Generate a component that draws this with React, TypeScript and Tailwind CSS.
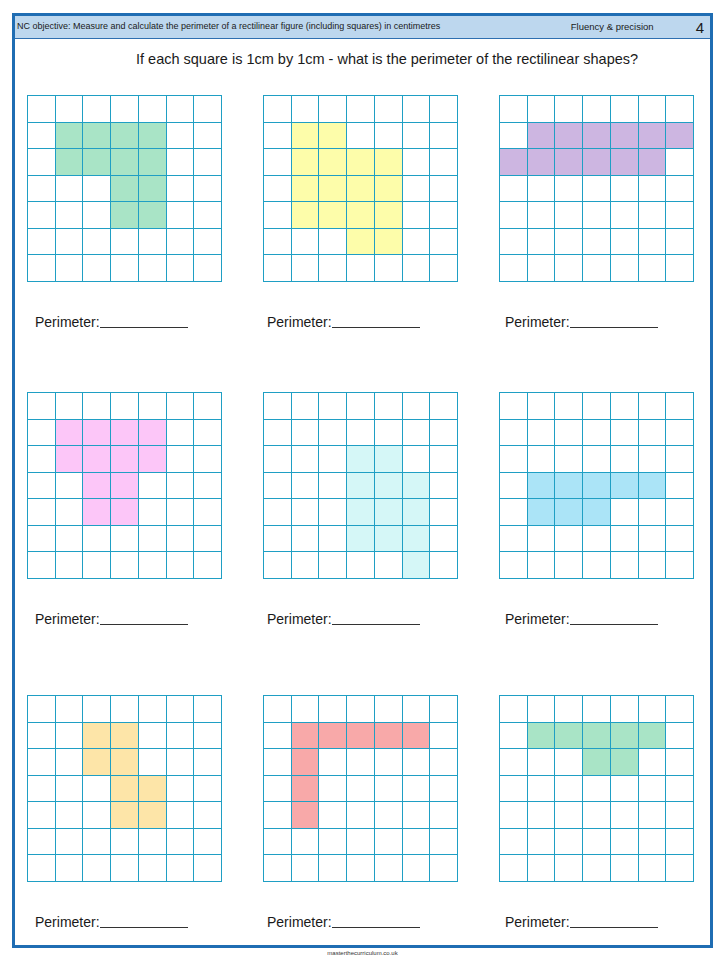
import React from "react";

type Shape = {
  color: string;
  cells: string[];
};

// each cell written as "row,col" on a 7x7 board
function span(rows: number[], cols: number[]): string[] {
  const out: string[] = [];
  rows.forEach((r) => cols.forEach((c) => out.push(`${r},${c}`)));
  return out;
}

const shapes: Shape[] = [
  { color: "bg-[#a9e4c6]", cells: [...span([1, 2], [1, 2, 3, 4]), ...span([3, 4], [3, 4])] },
  {
    color: "bg-[#fdfdaa]",
    cells: [...span([1], [1, 2]), ...span([2, 3, 4], [1, 2, 3, 4]), ...span([5], [3, 4])],
  },
  { color: "bg-[#cdb6e1]", cells: [...span([1], [1, 2, 3, 4, 5, 6]), ...span([2], [0, 1, 2, 3, 4, 5])] },
  { color: "bg-[#fcc6f8]", cells: [...span([1, 2], [1, 2, 3, 4]), ...span([3, 4], [2, 3])] },
  { color: "bg-[#d5f7f7]", cells: [...span([2, 3, 4, 5], [3, 4]), ...span([3, 4, 5, 6], [5])] },
  { color: "bg-[#abe4f7]", cells: [...span([3], [1, 2, 3, 4, 5]), ...span([4], [1, 2, 3])] },
  { color: "bg-[#fde5a8]", cells: [...span([1, 2], [2, 3]), ...span([3, 4], [3, 4])] },
  { color: "bg-[#f8a9a9]", cells: [...span([1], [1, 2, 3, 4, 5]), ...span([2, 3, 4], [1])] },
  { color: "bg-[#a9e4c6]", cells: [...span([1], [1, 2, 3, 4, 5]), ...span([2], [3, 4])] },
];

const labelPad = ["pl-[8px]", "pl-[4px]", "pl-[6px]"];
const rowGap = ["", "mt-[61px]", "mt-[67px]"];

function Board({ shape }: { shape: Shape }) {
  const filled = new Set(shape.cells);
  const cells = [];
  for (let r = 0; r < 7; r++) {
    for (let c = 0; c < 7; c++) {
      cells.push(
        <div key={`${r}-${c}`} className={filled.has(`${r},${c}`) ? shape.color : "bg-white"} />
      );
    }
  }
  return (
    <div className="grid h-[187px] w-[195px] grid-cols-7 grid-rows-7 gap-px bg-[#1f9fc4] p-px">
      {cells}
    </div>
  );
}

function Question({ shape, col }: { shape: Shape; col: number }) {
  return (
    <div className="flex flex-col">
      <Board shape={shape} />
      <div className={`mt-[31px] flex items-end text-[14px] leading-[18px] text-[#1a1a1a] ${labelPad[col]}`}>
        <span>Perimeter:</span>
        <span className="mb-[3px] inline-block w-[88px] border-b border-[#333]" />
      </div>
    </div>
  );
}

export default function App() {
  return (
    <div className="h-[960px] w-[720px] bg-white pt-[13px] font-['Liberation_Sans',sans-serif]">
      <div className="ml-[12px] h-[935px] w-[701px] border-[3px] border-[#1f6db3]">
        <div className="flex h-[23px] items-center border-b border-[#2e6fb0] bg-[#bdd7ee] pl-[2px] pr-[6px] text-[9px] text-[#1a1a1a]">
          <span>
            NC objective: Measure and calculate the perimeter of a rectilinear figure (including squares) in
            centimetres
          </span>
          <span className="ml-auto mr-[42px] text-[9.5px]">Fluency &amp; precision</span>
          <span className="text-[15px] leading-none">4</span>
        </div>

        <div className="h-[56px] pl-[121px] pt-[11px] text-[14.5px] leading-[18px] text-[#1a1a1a]">
          If each square is 1cm by 1cm - what is the perimeter of the rectilinear shapes?
        </div>

        {[0, 1, 2].map((row) => (
          <div
            key={row}
            className={`grid grid-cols-[195px_195px_195px] gap-x-[41px] pl-[12px] ${rowGap[row]}`}
          >
            {[0, 1, 2].map((col) => (
              <Question key={col} shape={shapes[row * 3 + col]} col={col} />
            ))}
          </div>
        ))}
      </div>
      <div className="ml-[12px] w-[701px] pt-[1px] text-center text-[6px] leading-[8px] text-[#333]">
        masterthecurriculum.co.uk
      </div>
    </div>
  );
}
